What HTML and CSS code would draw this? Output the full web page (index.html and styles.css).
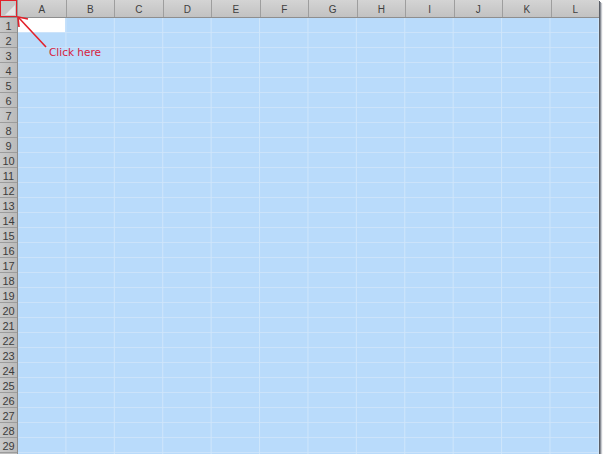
FILE: index.html
```html
<!DOCTYPE html>
<html>
<head>
<meta charset="utf-8">
<link rel="stylesheet" href="styles.css">
</head>
<body>
<div class="sheet">
  <div class="head-row">
    <div class="corner"><div class="corner-tri"></div></div>
    <div class="col-h">A</div><div class="col-h">B</div><div class="col-h">C</div><div class="col-h">D</div>
    <div class="col-h">E</div><div class="col-h">F</div><div class="col-h">G</div><div class="col-h">H</div>
    <div class="col-h">I</div><div class="col-h">J</div><div class="col-h">K</div><div class="col-h">L</div>
  </div>
  <div class="body">
    <div class="row-heads">
      <div class="row-h">1</div><div class="row-h">2</div><div class="row-h">3</div><div class="row-h">4</div>
      <div class="row-h">5</div><div class="row-h">6</div><div class="row-h">7</div><div class="row-h">8</div>
      <div class="row-h">9</div><div class="row-h">10</div><div class="row-h">11</div><div class="row-h">12</div>
      <div class="row-h">13</div><div class="row-h">14</div><div class="row-h">15</div><div class="row-h">16</div>
      <div class="row-h">17</div><div class="row-h">18</div><div class="row-h">19</div><div class="row-h">20</div>
      <div class="row-h">21</div><div class="row-h">22</div><div class="row-h">23</div><div class="row-h">24</div>
      <div class="row-h">25</div><div class="row-h">26</div><div class="row-h">27</div><div class="row-h">28</div>
      <div class="row-h">29</div>
    </div>
    <div class="cells">
      <div class="active"></div>
    </div>
  </div>
  <div class="callout-box"></div>
  <svg class="arrow" width="60" height="50" viewBox="0 0 60 50">
    <line x1="46" y1="47" x2="19" y2="18" stroke="#e2202a" stroke-width="1.6"/>
    <polyline points="19,27 18,17 28,19" fill="none" stroke="#e2202a" stroke-width="1.6"/>
  </svg>
  <div class="callout-text">Click here</div>
</div>
</body>
</html>
```
FILE: styles.css
```css
html, body {
  margin: 0;
  padding: 0;
  background: #ffffff;
}
.sheet {
  position: relative;
  width: 599px;
  height: 454px;
  background: #c4c4c4;
  box-shadow: 1px 1px 0 #5a5e66, 2px 2px 0 #8a8e96, 3px 3px 1px #c8cbd0;
  font-family: "Liberation Sans", Arial, sans-serif;
}
.head-row {
  display: flex;
  height: 17px;
  border-bottom: 1px solid #8e8e8e;
  background: linear-gradient(#d4d4d4, #c2c2c2);
}
.corner {
  width: 17px;
  flex: none;
  border-right: 1px solid #9a9a9a;
  position: relative;
  background: #c6c6c6;
}
.corner-tri {
  position: absolute;
  right: 2px;
  bottom: 2px;
  width: 0;
  height: 0;
  border-left: 10px solid transparent;
  border-bottom: 10px solid #e6e6e6;
}
.col-h {
  flex: 1;
  display: flex;
  align-items: center;
  justify-content: center;
  font-size: 10px;
  color: #3f3f3f;
  border-right: 1px solid #9e9e9e;
  padding-top: 1px;
}
.col-h:last-child {
  border-right: none;
}
.body {
  display: flex;
  height: 436px;
}
.row-heads {
  width: 17px;
  flex: none;
  border-right: 1px solid #8e8e8e;
  display: flex;
  flex-direction: column;
  background: #bdbdbd;
}
.row-h {
  height: 14px;
  flex: none;
  border-bottom: 1px solid #9c9c9c;
  font-size: 11px;
  color: #3c3c3c;
  display: flex;
  align-items: center;
  justify-content: center;
  padding-top: 1px;
  box-sizing: border-box;
  height: 15px;
  background: linear-gradient(to right, #c9c9c9, #bababa);
}
.cells {
  flex: 1;
  position: relative;
  background-color: #b9dbfb;
  background-image:
    linear-gradient(to right, transparent calc(100% - 1px), #cfe6fb calc(100% - 1px)),
    linear-gradient(to bottom, transparent 14px, #cce3fa 14px);
  background-size: calc(100% / 12) 15px;
}
.active {
  width: calc(100% / 12 - 1px);
  height: 14px;
  background: #ffffff;
}
.callout-box {
  position: absolute;
  left: 0;
  top: 0;
  width: 15px;
  height: 15px;
  border: 1px solid #e2202a;
}
.arrow {
  position: absolute;
  left: 0;
  top: 0;
}
.callout-text {
  position: absolute;
  left: 49px;
  top: 46px;
  font-family: "DejaVu Sans", "Liberation Sans", sans-serif;
  font-size: 10.5px;
  color: #d8203c;
}
```
